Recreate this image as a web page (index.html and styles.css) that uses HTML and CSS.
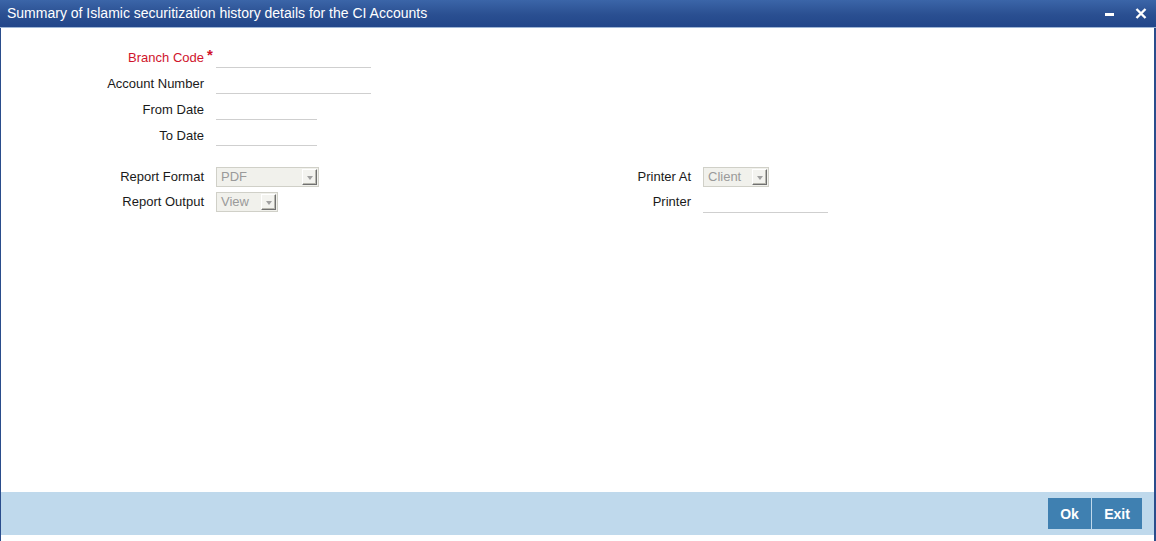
FILE: index.html
```html
<!DOCTYPE html>
<html>
<head>
<meta charset="utf-8">
<link rel="stylesheet" href="styles.css">
</head>
<body>
<div class="window">
  <div class="titlebar">
    <span class="title">Summary of Islamic securitization history details for the CI Accounts</span>
    <div class="win-ctrls">
      <span class="ctrl-min"></span>
      <svg class="ctrl-close" width="12" height="11" viewBox="0 0 12 11"><path d="M1.5 1 L10.5 10 M10.5 1 L1.5 10" stroke="#fff" stroke-width="2.4" fill="none"/></svg>
    </div>
  </div>
  <div class="content">
    <div class="form-top">
      <div class="row">
        <label class="lbl req">Branch Code<span class="star">*</span></label>
        <span class="field wide"></span>
      </div>
      <div class="row">
        <label class="lbl">Account Number</label>
        <span class="field wide"></span>
      </div>
      <div class="row">
        <label class="lbl">From Date</label>
        <span class="field short"></span>
      </div>
      <div class="row">
        <label class="lbl">To Date</label>
        <span class="field short"></span>
      </div>
    </div>
    <div class="form-bottom">
      <div class="col col-left">
        <div class="row2">
          <label class="lbl">Report Format</label>
          <div class="select sel-format"><span class="sel-val">PDF</span><span class="sel-btn"><i></i></span></div>
        </div>
        <div class="row2">
          <label class="lbl">Report Output</label>
          <div class="select sel-output"><span class="sel-val">View</span><span class="sel-btn"><i></i></span></div>
        </div>
      </div>
      <div class="col col-right">
        <div class="row2">
          <label class="lbl">Printer At</label>
          <div class="select sel-client"><span class="sel-val">Client</span><span class="sel-btn"><i></i></span></div>
        </div>
        <div class="row2">
          <label class="lbl">Printer</label>
          <span class="field printer"></span>
        </div>
      </div>
    </div>
  </div>
  <div class="footer">
    <button class="btn btn-ok">Ok</button>
    <button class="btn btn-exit">Exit</button>
  </div>
  <div class="bottom-gap"></div>
</div>
</body>
</html>
```
FILE: styles.css
```css
html, body {
  margin: 0;
  padding: 0;
  background: #fff;
}
body {
  font-family: "Liberation Sans", Arial, sans-serif;
  font-size: 13px;
  color: #1a1a1a;
}
.window {
  width: 1156px;
  height: 541px;
  box-sizing: border-box;
  display: flex;
  flex-direction: column;
  border-left: 1px solid #2a4d8c;
  border-right: 2px solid #2a4d8c;
  background: #fff;
}
.titlebar {
  height: 28px;
  flex: none;
  margin-left: -1px;
  margin-right: -2px;
  background: linear-gradient(#3b65a8, #2a4f91 55%, #22468a);
  border-bottom: 1px solid #9fb6d6;
  box-sizing: border-box;
  display: flex;
  align-items: center;
  justify-content: space-between;
  padding: 0 8px 0 7px;
}
.title {
  color: #fff;
  font-size: 14px;
  margin-top: -1px;
}
.win-ctrls {
  display: flex;
  align-items: center;
  gap: 21px;
  padding-right: 1px;
}
.ctrl-min {
  display: block;
  width: 9px;
  height: 3px;
  background: #fff;
  margin-top: 1px;
}
.ctrl-close {
  display: block;
}
.content {
  flex: 1;
  padding-top: 18px;
}
.row {
  display: flex;
  height: 26px;
}
.lbl {
  width: 203px;
  flex: none;
  text-align: right;
  line-height: 22px;
  height: 22px;
  padding-top: 1px;
  box-sizing: border-box;
  position: relative;
}
.req {
  color: #d0142c;
}
.star {
  position: absolute;
  left: 206px;
  top: -2px;
  color: #d0142c;
  font-size: 15px;
  font-weight: bold;
}
.field {
  display: block;
  height: 21px;
  border-bottom: 1px solid #cfcfcf;
  margin-left: 12px;
}
.wide { width: 155px; }
.short { width: 101px; }
.form-bottom {
  display: flex;
  margin-top: 17px;
}
.col-left {
  width: 488px;
}
.row2 {
  display: flex;
  height: 25px;
}
.row2 .lbl {
  line-height: 20px;
  height: 20px;
  padding-top: 0;
}
.col-right .lbl {
  width: 202px;
}
.select {
  margin-left: 12px;
  height: 20px;
  box-sizing: border-box;
  border: 1px solid #d0d0c8;
  background: #f1f1ec;
  display: flex;
  align-items: center;
  justify-content: space-between;
  padding-left: 4px;
  padding-right: 1px;
  color: #9a9a9a;
}
.sel-format { width: 103px; }
.sel-output { width: 62px; }
.sel-client { width: 66px; }
.sel-val {
  line-height: 18px;
}
.sel-btn {
  width: 15px;
  height: 16px;
  box-sizing: border-box;
  background: #f3f3ef;
  border-top: 1px solid #fff;
  border-left: 1px solid #fff;
  border-right: 1px solid #707070;
  border-bottom: 1px solid #707070;
  box-shadow: inset -1px -1px 0 #b8b8b0;
  display: flex;
  align-items: center;
  justify-content: center;
}
.sel-btn i {
  display: block;
  width: 0;
  height: 0;
  border-left: 3.5px solid transparent;
  border-right: 3.5px solid transparent;
  border-top: 4px solid #a0a0a0;
  margin-top: 1px;
}
.field.printer {
  width: 125px;
  height: 20px;
  margin-left: 12px;
}
.footer {
  height: 43px;
  flex: none;
  background: #bfd9ec;
  display: flex;
  justify-content: flex-end;
  align-items: flex-start;
  padding: 6px 12px 0 0;
  box-sizing: border-box;
  gap: 1px;
}
.btn {
  height: 31px;
  border: none;
  background: #3f80b1;
  color: #fff;
  font-family: "Liberation Sans", Arial, sans-serif;
  font-weight: bold;
  font-size: 14px;
  padding: 0;
  margin: 0;
}
.btn-ok { width: 43px; }
.btn-exit { width: 50px; }
.bottom-gap {
  height: 6px;
  flex: none;
}
```
